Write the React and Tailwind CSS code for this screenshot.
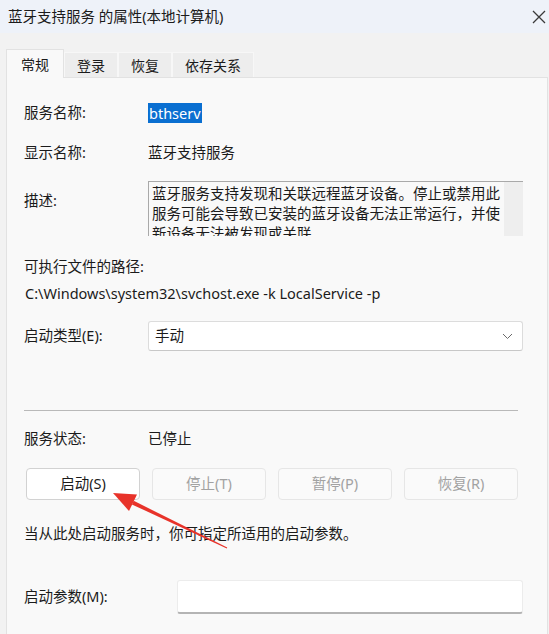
import React from 'react';

const font = "font-['Noto_Sans','Noto_Sans_CJK_SC',sans-serif]";

function Tab({ label, active }) {
    if (active) {
        return (
            <div className="relative z-10 -mb-px flex h-[29px] w-[58px] items-center justify-center border border-b-0 border-[#e2e2e2] bg-[#f9f9f9] text-[14px] text-[#1b1b1b]">
                {label}
            </div>
        );
    }
    return (
        <div className="flex h-[25px] items-center justify-center border-x border-t border-[#f7f7f7] bg-[#ededed] px-[12px] text-[14px] text-[#1b1b1b]">
            {label}
        </div>
    );
}

function ActionButton({ label, enabled }) {
    return (
        <div
            className={`flex h-[32px] w-[114px] items-center justify-center rounded-[4px] border text-[14.5px] ${
                enabled ? 'border-[#d2d2d2] bg-white text-[#1b1b1b]' : 'border-[#e6e6e6] bg-[#fafafa] text-[#a2a2a2]'
            }`}
        >
            {label}
        </div>
    );
}

export default function App() {
    return (
        <div className={`relative h-[634px] w-[549px] overflow-hidden bg-[#f2f2f2] ${font} text-[#1b1b1b]`}>
            {/* title bar */}
            <div className="flex h-[33px] items-center justify-between bg-[#eef2f9] pl-[8px] pr-[2px]">
                <span className="text-[14.5px] leading-none">蓝牙支持服务 的属性(本地计算机)</span>
                <svg width="14" height="14" viewBox="0 0 14 14" className="mr-[1px] mt-[1px]">
                    <path d="M1 1 L13 13 M13 1 L1 13" stroke="#3a3a3a" strokeWidth="1.3" fill="none" />
                </svg>
            </div>

            {/* tabs */}
            <div className="flex h-[44px] items-end pl-[6px]">
                <Tab label="常规" active />
                <Tab label="登录" />
                <Tab label="恢复" />
                <Tab label="依存关系" />
            </div>

            {/* panel */}
            <div className="ml-[6px] mr-[1px] h-[560px] border border-[#e2e2e2] bg-[#f9f9f9] pl-[17px] pr-[24px] text-[14.5px]">
                <div className="mt-[25px] flex h-[20px] items-center">
                    <span className="w-[124px]">服务名称:</span>
                    <span className="bg-[#0a6fd1] px-[1px] leading-[20px] text-white">bthserv</span>
                </div>

                <div className="mt-[20px] flex h-[20px] items-center">
                    <span className="w-[124px]">显示名称:</span>
                    <span>蓝牙支持服务</span>
                </div>

                <div className="mt-[18px] flex items-start">
                    <span className="mt-[9px] w-[124px] leading-[20px]">描述:</span>
                    <div className="flex h-[55px] flex-1 overflow-hidden border-l border-t border-[#a9a9a9]">
                        <div className="flex-1 pl-[3px] pt-px leading-[20px]">
                            <div className="whitespace-nowrap">蓝牙服务支持发现和关联远程蓝牙设备。停止或禁用此</div>
                            <div className="whitespace-nowrap">服务可能会导致已安装的蓝牙设备无法正常运行，并使</div>
                            <div className="whitespace-nowrap">新设备无法被发现或关联。</div>
                        </div>
                        <div className="w-[19px] bg-[#eeeeee]" />
                    </div>
                </div>

                <div className="mt-[20px] h-[20px] leading-[20px]">可执行文件的路径:</div>
                <div className="mt-[7px] h-[20px] pl-[1px] leading-[20px]">C:\Windows\system32\svchost.exe -k LocalService -p</div>

                <div className="mt-[18px] flex items-center">
                    <span className="w-[124px]">启动类型(E):</span>
                    <div className="flex h-[30px] flex-1 items-center justify-between rounded-[3px] border border-[#dcdcdc] border-b-[#c8c8c8] bg-white pl-[6px] pr-[9px]">
                        <span>手动</span>
                        <svg width="11" height="7" viewBox="0 0 11 7">
                            <path d="M1 1 L5.5 5.5 L10 1" stroke="#6a6a6a" strokeWidth="1" fill="none" />
                        </svg>
                    </div>
                </div>

                <div className="mr-[5px] mt-[59px] h-px bg-[#b9b9b9]" />

                <div className="mt-[18px] flex h-[20px] items-center">
                    <span className="w-[124px]">服务状态:</span>
                    <span>已停止</span>
                </div>

                <div className="ml-[2px] mt-[19px] flex gap-[12px]">
                    <ActionButton label="启动(S)" enabled />
                    <ActionButton label="停止(T)" />
                    <ActionButton label="暂停(P)" />
                    <ActionButton label="恢复(R)" />
                </div>

                <div className="mt-[23px] h-[20px] leading-[20px]">当从此处启动服务时，你可指定所适用的启动参数。</div>

                <div className="mt-[37px] flex items-center">
                    <span className="w-[153px]">启动参数(M):</span>
                    <div className="h-[34px] flex-1 rounded-[3px] border border-[#ececec] border-b-[2px] border-b-[#b4b4b4] bg-white" />
                </div>
            </div>

            {/* red annotation arrow */}
            <svg className="pointer-events-none absolute left-0 top-0" width="549" height="634" viewBox="0 0 549 634">
                <polygon points="227.2,547.6 226.8,548.4 131.9,504.4 133.7,500.8" fill="#e8332a" />
                <polygon points="113,493 137,494.6 129,511" fill="#e8332a" />
            </svg>
        </div>
    );
}
